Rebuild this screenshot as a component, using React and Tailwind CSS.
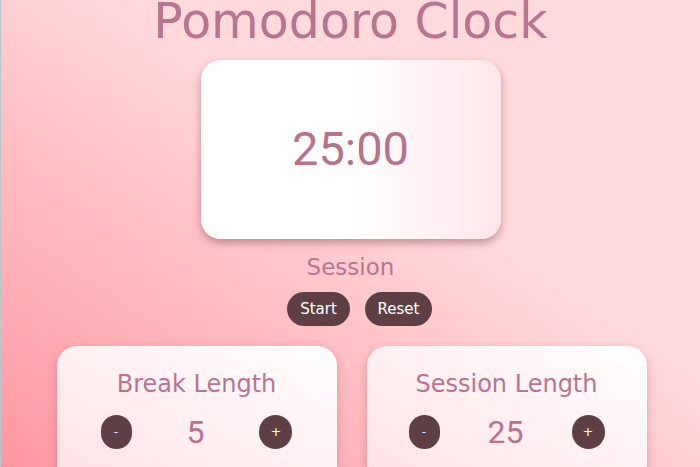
export default function App() {
  const font = { fontFamily: "'DejaVu Sans', Lato, sans-serif" };
  const roboto = { fontFamily: "Roboto, sans-serif" };
  return (
    <div
      className="h-[467px] w-full overflow-hidden border-l border-[#b9c6cb] bg-[linear-gradient(to_top_right,#ff97a1_0%,#ffbec4_35%,#ffdadd_60%,#ffdadd_100%)] flex flex-col items-center text-[#b87590]"
      style={font}
    >
      <h1 className="shrink-0 text-[49px] leading-[50px] -mt-[3px]">Pomodoro Clock</h1>

      <div className="shrink-0 mt-[13px] w-[300px] h-[179px] rounded-[20px] bg-[linear-gradient(to_right,#ffffff_50%,#ffe6ea)] shadow-[0_4px_8px_rgba(120,60,70,0.45)] flex items-center justify-center">
        <span className="text-[47px] text-[#b9728c]" style={roboto}>
          25:00
        </span>
      </div>

      <div className="shrink-0 mt-[15px] text-[23px] leading-[26px]">Session</div>

      <div className="shrink-0 mt-[12px] ml-[18px] flex gap-[15px]">
        <button className="h-[34px] w-[63px] rounded-full bg-[#5e3f44] text-white text-[15px]">Start</button>
        <button className="h-[34px] w-[67px] rounded-full bg-[#5e3f44] text-white text-[15px]">Reset</button>
      </div>

      <div className="shrink-0 mt-[20px] ml-[2px] flex gap-[30px]">
        {[
          ["Break Length", "5", "w-[192px]"],
          ["Session Length", "25", "w-[196px]"],
        ].map(([label, val, rowW]) => (
          <div
            key={label}
            className="w-[280px] h-[140px] rounded-[20px] bg-[linear-gradient(to_top_right,#ffe1e5,#ffffff)] shadow-[0_4px_10px_rgba(150,70,80,0.35)] flex flex-col items-center pt-[24px]"
          >
            <div className="text-[24px] leading-[28px]">{label}</div>
            <div className={`mt-[17px] ${rowW} flex items-center justify-between`}>
              <button className="h-[34px] w-[31px] rounded-full bg-[#5e3f44] text-[#e8f4ff] text-[12px]">-</button>
              <span className="text-[32px] leading-[34px] text-[#b9728c]" style={roboto}>
                {val}
              </span>
              <button className="h-[34px] w-[33px] rounded-full bg-[#5e3f44] text-white text-[13px]">+</button>
            </div>
          </div>
        ))}
      </div>
    </div>
  );
}
